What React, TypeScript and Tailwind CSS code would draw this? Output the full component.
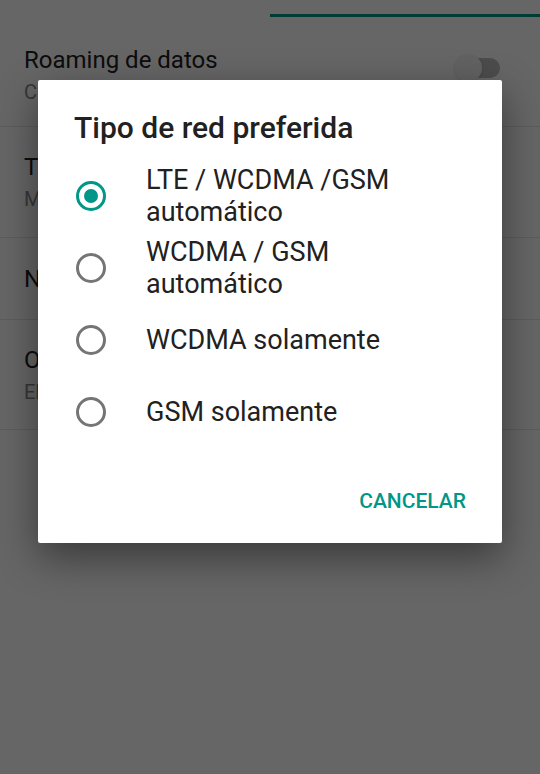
import { useState } from "react";

const settings = [
  { title: "Roaming de datos", sub: "Conectarse a servicios de datos en roaming", h: "h-[110px] pt-[6px]", toggle: true },
  { title: "Tipo de red preferida", sub: "Modo de red preferido: LTE / WCDMA /GSM", h: "h-[111px]" },
  { title: "Nombres de puntos de acceso", sub: "", h: "h-[82px]" },
  { title: "Operadores de red", sub: "Elegir un operador de red", h: "h-[110px]" },
];

const options = ["LTE / WCDMA /GSM automático", "WCDMA / GSM automático", "WCDMA solamente", "GSM solamente"];

const Radio = ({ checked }: { checked: boolean }) => (
  <div
    className={`w-[30px] h-[30px] rounded-full border-[3px] flex items-center justify-center shrink-0 ${
      checked ? "border-[#009688]" : "border-[#757575]"
    }`}
  >
    {checked && <div className="w-[14px] h-[14px] rounded-full bg-[#009688]" />}
  </div>
);

export default function App() {
  const [selected, setSelected] = useState(0);

  return (
    <div
      className="relative w-[540px] h-[774px] overflow-hidden bg-white"
      style={{ fontFamily: "Roboto, 'Noto Sans', sans-serif" }}
    >
      {/* Settings page behind the dialog */}
      <div className="h-[17px] flex flex-col justify-end">
        <div className="h-[3px] ml-[270px] bg-[#009688]" />
      </div>
      {settings.map((s) => (
        <div key={s.title} className={`${s.h} flex items-center justify-between px-6 border-b border-[#e6e6e6]`}>
          <div>
            <div className="text-[24px] leading-[30px] text-[#212121]">{s.title}</div>
            {s.sub && <div className="mt-[4px] text-[20px] leading-[26px] text-[#8a8a8a]">{s.sub}</div>}
          </div>
          {s.toggle && (
            <div className="relative w-[46px] h-[28px] mr-[16px] -mt-[14px] flex items-center">
              <div className="w-full h-[20px] rounded-full bg-[#bdbdbd]" />
              <div className="absolute left-0 w-[28px] h-[28px] rounded-full bg-[#f5f5f5] shadow" />
            </div>
          )}
        </div>
      ))}

      {/* Scrim */}
      <div className="absolute inset-0 bg-black/60" />

      {/* Dialog */}
      <div className="absolute left-[38px] top-[80px] w-[464px] bg-white rounded-[2px] shadow-[0_14px_40px_rgba(0,0,0,0.45)]">
        <h2 className="pt-[30px] px-[36px] text-[30px] leading-[36px] font-medium text-[#212121]">
          Tipo de red preferida
        </h2>
        <div className="mt-[14px]">
          {options.map((o, i) => (
            <div
              key={o}
              onClick={() => setSelected(i)}
              className="h-[72px] flex items-center pl-[38px] pr-[60px] cursor-pointer"
            >
              <Radio checked={selected === i} />
              <span className="ml-[40px] text-[27px] leading-[32px] text-[#212121]">{o}</span>
            </div>
          ))}
        </div>
        <div className="h-[95px] pt-[12px] flex items-center justify-end pr-[36px]">
          <button className="text-[21px] font-medium text-[#009688]">CANCELAR</button>
        </div>
      </div>
    </div>
  );
}
